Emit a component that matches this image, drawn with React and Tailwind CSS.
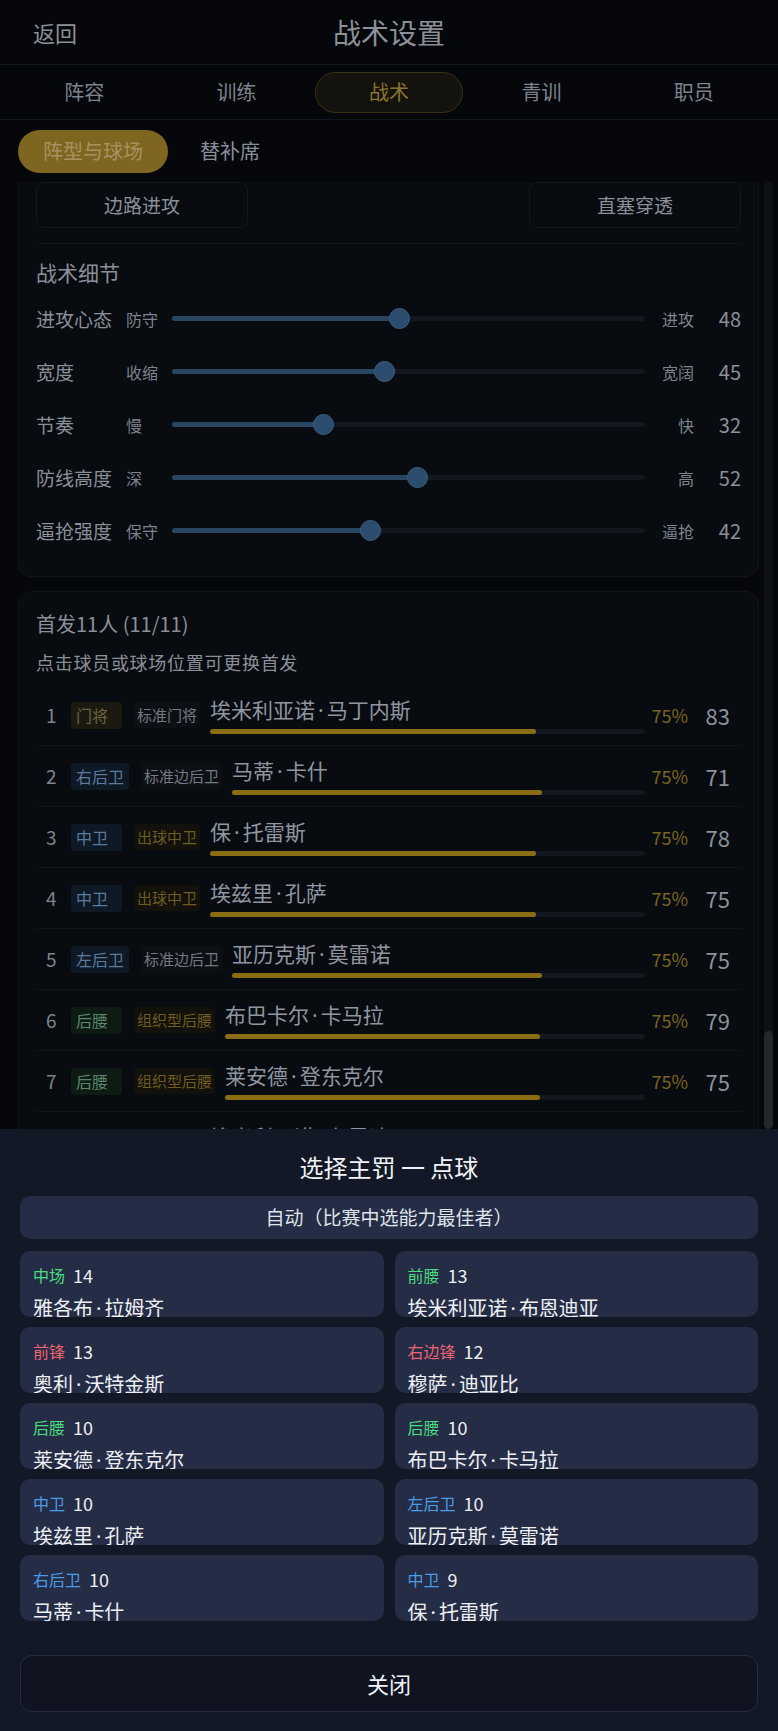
import React from "react";

const sliders = [
  { label: "进攻心态", min: "防守", max: "进攻", v: 48 },
  { label: "宽度", min: "收缩", max: "宽阔", v: 45 },
  { label: "节奏", min: "慢", max: "快", v: 32 },
  { label: "防线高度", min: "深", max: "高", v: 52 },
  { label: "逼抢强度", min: "保守", max: "逼抢", v: 42 },
];

const badgeStyles = {
  gk: "bg-[#1c1a10] text-[#6e6440]",
  def: "bg-[#0f1926] text-[#5a7b9d]",
  mid: "bg-[#0e1b15] text-[#5c876a]",
};
const tagStyles = {
  grey: "bg-[#0c0f14] text-[#737a84]",
  gold: "bg-[#13110b] text-[#6e5c22]",
};

const players = [
  { n: 1, pos: "门将", k: "gk", tag: "标准门将", t: "grey", name: "埃米利亚诺·马丁内斯", r: 83 },
  { n: 2, pos: "右后卫", k: "def", tag: "标准边后卫", t: "grey", name: "马蒂·卡什", r: 71 },
  { n: 3, pos: "中卫", k: "def", tag: "出球中卫", t: "gold", name: "保·托雷斯", r: 78 },
  { n: 4, pos: "中卫", k: "def", tag: "出球中卫", t: "gold", name: "埃兹里·孔萨", r: 75 },
  { n: 5, pos: "左后卫", k: "def", tag: "标准边后卫", t: "grey", name: "亚历克斯·莫雷诺", r: 75 },
  { n: 6, pos: "后腰", k: "mid", tag: "组织型后腰", t: "gold", name: "布巴卡尔·卡马拉", r: 79 },
  { n: 7, pos: "后腰", k: "mid", tag: "组织型后腰", t: "gold", name: "莱安德·登东克尔", r: 75 },
  { n: 8, pos: "前腰", k: "mid", tag: "创造前腰", t: "gold", name: "埃米利亚诺·布恩迪亚", r: 77 },
  { n: 9, pos: "前锋", k: "def", tag: "标准前锋", t: "grey", name: "奥利·沃特金斯", r: 80 },
];

const takers = [
  { pos: "中场", c: "text-[#4ade80]", v: 14, name: "雅各布·拉姆齐" },
  { pos: "前腰", c: "text-[#4ade80]", v: 13, name: "埃米利亚诺·布恩迪亚" },
  { pos: "前锋", c: "text-[#ef6470]", v: 13, name: "奥利·沃特金斯" },
  { pos: "右边锋", c: "text-[#ef6470]", v: 12, name: "穆萨·迪亚比" },
  { pos: "后腰", c: "text-[#4ade80]", v: 10, name: "莱安德·登东克尔" },
  { pos: "后腰", c: "text-[#4ade80]", v: 10, name: "布巴卡尔·卡马拉" },
  { pos: "中卫", c: "text-[#4b9de6]", v: 10, name: "埃兹里·孔萨" },
  { pos: "左后卫", c: "text-[#4b9de6]", v: 10, name: "亚历克斯·莫雷诺" },
  { pos: "右后卫", c: "text-[#4b9de6]", v: 10, name: "马蒂·卡什" },
  { pos: "中卫", c: "text-[#4b9de6]", v: 9, name: "保·托雷斯" },
];

function Name({ text }) {
  const parts = text.split("·");
  return (
    <>
      {parts.map((p, i) => (
        <React.Fragment key={i}>
          {i > 0 && <span className="font-['Noto_Sans',sans-serif] px-[3px]">·</span>}
          {p}
        </React.Fragment>
      ))}
    </>
  );
}

function SliderRow({ s }) {
  return (
    <div className="grid grid-cols-[90px_46px_1fr_49px_47px] items-center h-[53px]">
      <div className="text-[19px] text-[#8a9099] leading-none">{s.label}</div>
      <div className="text-[16px] text-[#7d848d] leading-none">{s.min}</div>
      <div className="relative h-[21px] flex items-center">
        <div className="w-full h-[5px] rounded-full bg-[#131820]" />
        <div
          className="absolute left-0 top-[8px] h-[5px] rounded-full bg-[#284561]"
          style={{ width: `${s.v}%` }}
        />
        <div
          className="absolute top-0 w-[21px] h-[21px] -ml-[10.5px] rounded-full bg-[#2b4c6c] border border-[#3b6283]"
          style={{ left: `${s.v}%` }}
        />
      </div>
      <div className="text-[16px] text-[#7d848d] leading-none text-right">{s.max}</div>
      <div className="text-[20px] text-[#8a9099] leading-none text-right">{s.v}</div>
    </div>
  );
}

function PlayerRow({ p }) {
  return (
    <div className="flex items-center h-[61px] border-b border-[#10151c] pr-[11px]">
      <div className="w-[35px] pl-[10px] text-[19px] text-[#7d848d]">{p.n}</div>
      <div className={`min-w-[51px] h-[27px] px-[5px] rounded-[4px] flex items-center text-[16px] ${badgeStyles[p.k]}`}>
        {p.pos}
      </div>
      <div className={`ml-[12px] h-[26px] px-[3px] rounded-[4px] flex items-center text-[15px] ${tagStyles[p.t]}`}>
        {p.tag}
      </div>
      <div className="ml-[10px] flex-1 flex flex-col">
        <div className="text-[21px] leading-[26px] text-[#8f96a0] whitespace-nowrap">
          <Name text={p.name} />
        </div>
        <div className="mt-[6px] h-[5px] rounded-full bg-[#131820] relative">
          <div className="absolute left-0 top-0 h-[5px] w-[75%] rounded-full bg-[#8a6c13]" />
        </div>
      </div>
      <div className="ml-[6px] w-[37px] text-[18px] text-[#7a6420] text-right">75%</div>
      <div className="ml-[14px] w-[28px] text-[22px] text-[#8a929c] text-right">{p.r}</div>
    </div>
  );
}

export default function App() {
  return (
    <div className="relative w-full h-[1731px] overflow-hidden bg-[#05070b] font-['Noto_Sans_CJK_SC','Noto_Sans',sans-serif]">
      {/* Header */}
      <div className="grid grid-cols-[1fr_auto_1fr] items-center h-[65px] border-b border-[#10151e]">
        <div className="pl-[33px] text-[22px] text-[#8b9098]">返回</div>
        <div className="text-[28px] text-[#8b9098]">战术设置</div>
        <div />
      </div>
      {/* Tabs */}
      <div className="grid grid-cols-5 items-center h-[55px] px-[8px] border-b border-[#10151e]">
        {["阵容", "训练", "战术", "青训", "职员"].map((t) =>
          t === "战术" ? (
            <div key={t} className="flex justify-center">
              <div className="w-[148px] h-[41px] rounded-full border border-[#3a3218] bg-[#14120c] flex items-center justify-center text-[20px] text-[#8a7430]">
                {t}
              </div>
            </div>
          ) : (
            <div key={t} className="text-center text-[20px] text-[#7d838c]">{t}</div>
          )
        )}
      </div>
      {/* Sub tabs */}
      <div className="flex items-center h-[62px] pl-[18px] gap-[32px]">
        <div className="w-[150px] h-[43px] rounded-full bg-[#7e6520] flex items-center justify-center text-[20px] text-[#a99262]">
          阵型与球场
        </div>
        <div className="text-[20px] text-[#8a9099]">替补席</div>
      </div>

      {/* Content */}
      <div className="flex h-[947px] overflow-hidden">
        <div className="flex-1 pl-[18px] flex flex-col">
          {/* Card 1 */}
          <div className="bg-[#080b10] border-x border-b border-[#10151d] rounded-b-[14px] px-[17px] pb-[19px]">
            <div className="flex justify-between">
              <div className="w-[212px] h-[46px] rounded-[8px] border border-[#121820] flex items-center justify-center text-[19px] text-[#8a9099]">
                边路进攻
              </div>
              <div className="w-[212px] h-[46px] rounded-[8px] border border-[#121820] flex items-center justify-center text-[19px] text-[#8a9099]">
                直塞穿透
              </div>
            </div>
            <div className="mt-[15px] border-t border-[#10151d]" />
            <div className="mt-[14px] h-[28px] text-[21px] leading-[28px] text-[#8a9099]">战术细节</div>
            <div className="mt-[6px]">
              {sliders.map((s) => (
                <SliderRow key={s.label} s={s} />
              ))}
            </div>
          </div>

          {/* Card 2 */}
          <div className="mt-[14px] bg-[#080b10] border border-[#10151d] rounded-[14px] px-[17px] pt-[18px] shrink-0">
            <div className="text-[20px] leading-[28px] text-[#8a9099]">首发11人 (11/11)</div>
            <div className="mt-[11px] text-[18px] leading-[26px] text-[#8a9099] tracking-[0.04em]">
              点击球员或球场位置可更换首发
            </div>
            <div className="mt-[10px]">
              {players.map((p) => (
                <PlayerRow key={p.n} p={p} />
              ))}
            </div>
          </div>
        </div>
        {/* Scrollbar */}
        <div className="w-[9px] ml-[5px] mr-[5px] rounded-full bg-[#0d1116] flex flex-col justify-end">
          <div className="h-[98px] rounded-full bg-[#22272e]" />
        </div>
      </div>

      {/* Bottom sheet */}
      <div className="absolute left-0 right-0 bottom-0 top-[1129px] bg-[#121826] px-[20px] pt-[22px]">
        <div className="text-center text-[24px] leading-[32px] text-[#f0f2f5]">选择主罚 一 点球</div>
        <div className="mt-[13px] h-[43px] rounded-[10px] bg-[#252c45] flex items-center justify-center text-[19px] text-[#dfe3ea]">
          自动（比赛中选能力最佳者）
        </div>
        <div className="mt-[12px] grid grid-cols-2 gap-x-[11px] gap-y-[10px]">
          {takers.map((t, i) => (
            <div key={i} className="h-[66px] overflow-hidden rounded-[10px] bg-[#252c45] px-[13px] pt-[13px]">
              <div className="flex items-center h-[22px] gap-[8px]">
                <span className={`text-[16px] ${t.c}`}>{t.pos}</span>
                <span className="text-[18px] text-[#eef0f4]">{t.v}</span>
              </div>
              <div className="mt-[8px] text-[20px] leading-[28px] text-[#eef0f4] whitespace-nowrap">
                <Name text={t.name} />
              </div>
            </div>
          ))}
        </div>
        <div className="mt-[34px] h-[57px] rounded-[12px] border border-[#262d3d] bg-[#0f1420] flex items-center justify-center text-[22px] text-[#f0f2f5]">
          关闭
        </div>
      </div>
    </div>
  );
}
